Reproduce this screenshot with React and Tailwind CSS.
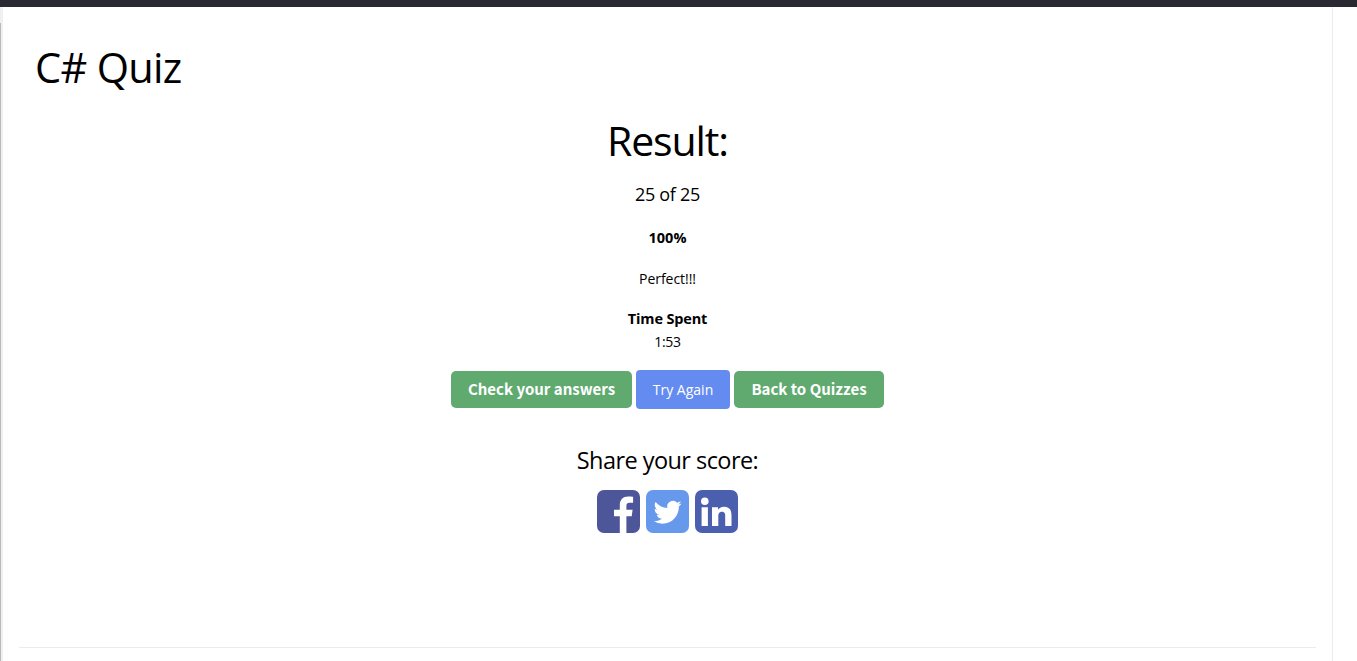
const uiFont = "font-['Open_Sans','Noto_Sans',sans-serif]";
const buttonFont = "font-['Noto_Sans_CJK_SC',sans-serif]";

function FacebookIcon() {
  return (
    <svg viewBox="0 0 43 43" className="h-[43px] w-[43px]">
      <rect width="43" height="43" rx="7" fill="#4c5698" />
      <path
        fill="#fff"
        d="M22.8 43V26.2h-5.8v-6.4h5.8v-4.7c0-5.6 3.2-8.6 8.3-8.6 2 0 3.900.1 5 .3v5.900h-3.500c-2.700 0-3.200 1.300-3.200 3.200v3.900h6.200l-.9 6.400h-5.300V43z"
      />
    </svg>
  );
}

function TwitterIcon() {
  return (
    <svg viewBox="0 0 43 43" className="h-[43px] w-[43px]">
      <rect width="43" height="43" rx="7" fill="#6698ec" />
      <g transform="translate(7.600 8.200) scale(1.170)">
        <path
          fill="#fff"
          d="M23.953 4.57a10 10 0 01-2.825.775 4.958 4.958 0 002.163-2.723c-.951.555-2.005.959-3.127 1.184a4.92 4.92 0 00-8.384 4.482C7.69 8.095 4.067 6.130 1.640 3.162a4.822 4.822 0 00-.666 2.475c0 1.710.870 3.213 2.188 4.096a4.904 4.904 0 01-2.228-.616v.060a4.923 4.923 0 003.946 4.827 4.996 4.996 0 01-2.212.085 4.936 4.936 0 004.604 3.417 9.867 9.867 0 01-6.102 2.105c-.390 0-.779-.023-1.170-.067a13.995 13.995 0 007.557 2.209c9.053 0 13.998-7.496 13.998-13.985 0-.210 0-.420-.015-.630A9.935 9.935 0 0024 4.590z"
        />
      </g>
    </svg>
  );
}

function LinkedInIcon() {
  return (
    <svg viewBox="0 0 43 43" className="h-[43px] w-[43px]">
      <rect width="43" height="43" rx="7" fill="#4a5fae" />
      <circle cx="9.8" cy="11.200" r="3.800" fill="#fff" />
      <path
        fill="#fff"
        d="M6.600 17.200h6.300v18.700H6.600zM17 17.200h6v2.600c.9-1.700 3-3.100 6-3.100 6 0 7.500 3.700 7.500 9v10.200h-6.300v-9.300c0-2.400-.2-4.900-3.200-4.900s-3.700 2.300-3.700 4.800v9.400H17z"
      />
    </svg>
  );
}

function QuizButton({ children, className }) {
  return (
    <button
      className={`flex h-[37px] items-center justify-center rounded-[5px] bg-[#60aa70] pb-[2px] text-[15px] leading-none font-bold whitespace-nowrap text-white ${buttonFont} ${className}`}
    >
      {children}
    </button>
  );
}

export default function App() {
  return (
    <div className={`flex h-[661px] w-full flex-col overflow-hidden bg-white text-black ${uiFont}`}>
      <header className="h-[7px] shrink-0 bg-[#292833]" />
      <div className="flex flex-1">
        <div className="flex w-[3px] flex-col bg-[#f0f0f0]">
          <div className="mt-4 w-px flex-1 bg-[#b9b9b9]" />
        </div>
        <main className="flex w-[1330px] flex-col border-r border-[#ececec] px-4 pt-[30px]">
          <h1 className="pl-4 text-[41.5px] leading-[60px] tracking-[-0.7px]">C# Quiz</h1>
          <section className="mt-[13px] flex flex-col items-center">
            <h2 className="text-[41px] leading-[60px] tracking-[-1.1px]">Result:</h2>
            <p className="mt-[12px] text-[18px] leading-6 tracking-[-0.3px]">25 of 25</p>
            <p className="mt-[20px] text-[14.5px] leading-[23px] font-bold">100%</p>
            <p className="mt-[18px] text-[14px] leading-[23px] tracking-[-0.05px]">Perfect!!!</p>
            <p className="mt-[17px] text-[14.5px] leading-[23px] font-bold tracking-[-0.15px]">Time Spent</p>
            <p className="text-[14px] leading-[23px] tracking-[-0.3px]">1:53</p>
            <div className="mt-[17px] flex items-center gap-1">
              <QuizButton className="w-[181px]">Check your answers</QuizButton>
              <button className="h-[39px] w-[94px] rounded-[4px] bg-[#648cf0] text-[14px] text-white">
                Try Again
              </button>
              <QuizButton className="w-[150px]">Back to Quizzes</QuizButton>
            </div>
            <h3 className="mt-[35px] text-[23.5px] leading-8 tracking-[-0.55px]">Share your score:</h3>
            <div className="mt-[14px] flex gap-[6px]">
              <FacebookIcon />
              <TwitterIcon />
              <LinkedInIcon />
            </div>
          </section>
          <hr className="mt-auto mb-[13px] border-[#ececec]" />
        </main>
      </div>
    </div>
  );
}
